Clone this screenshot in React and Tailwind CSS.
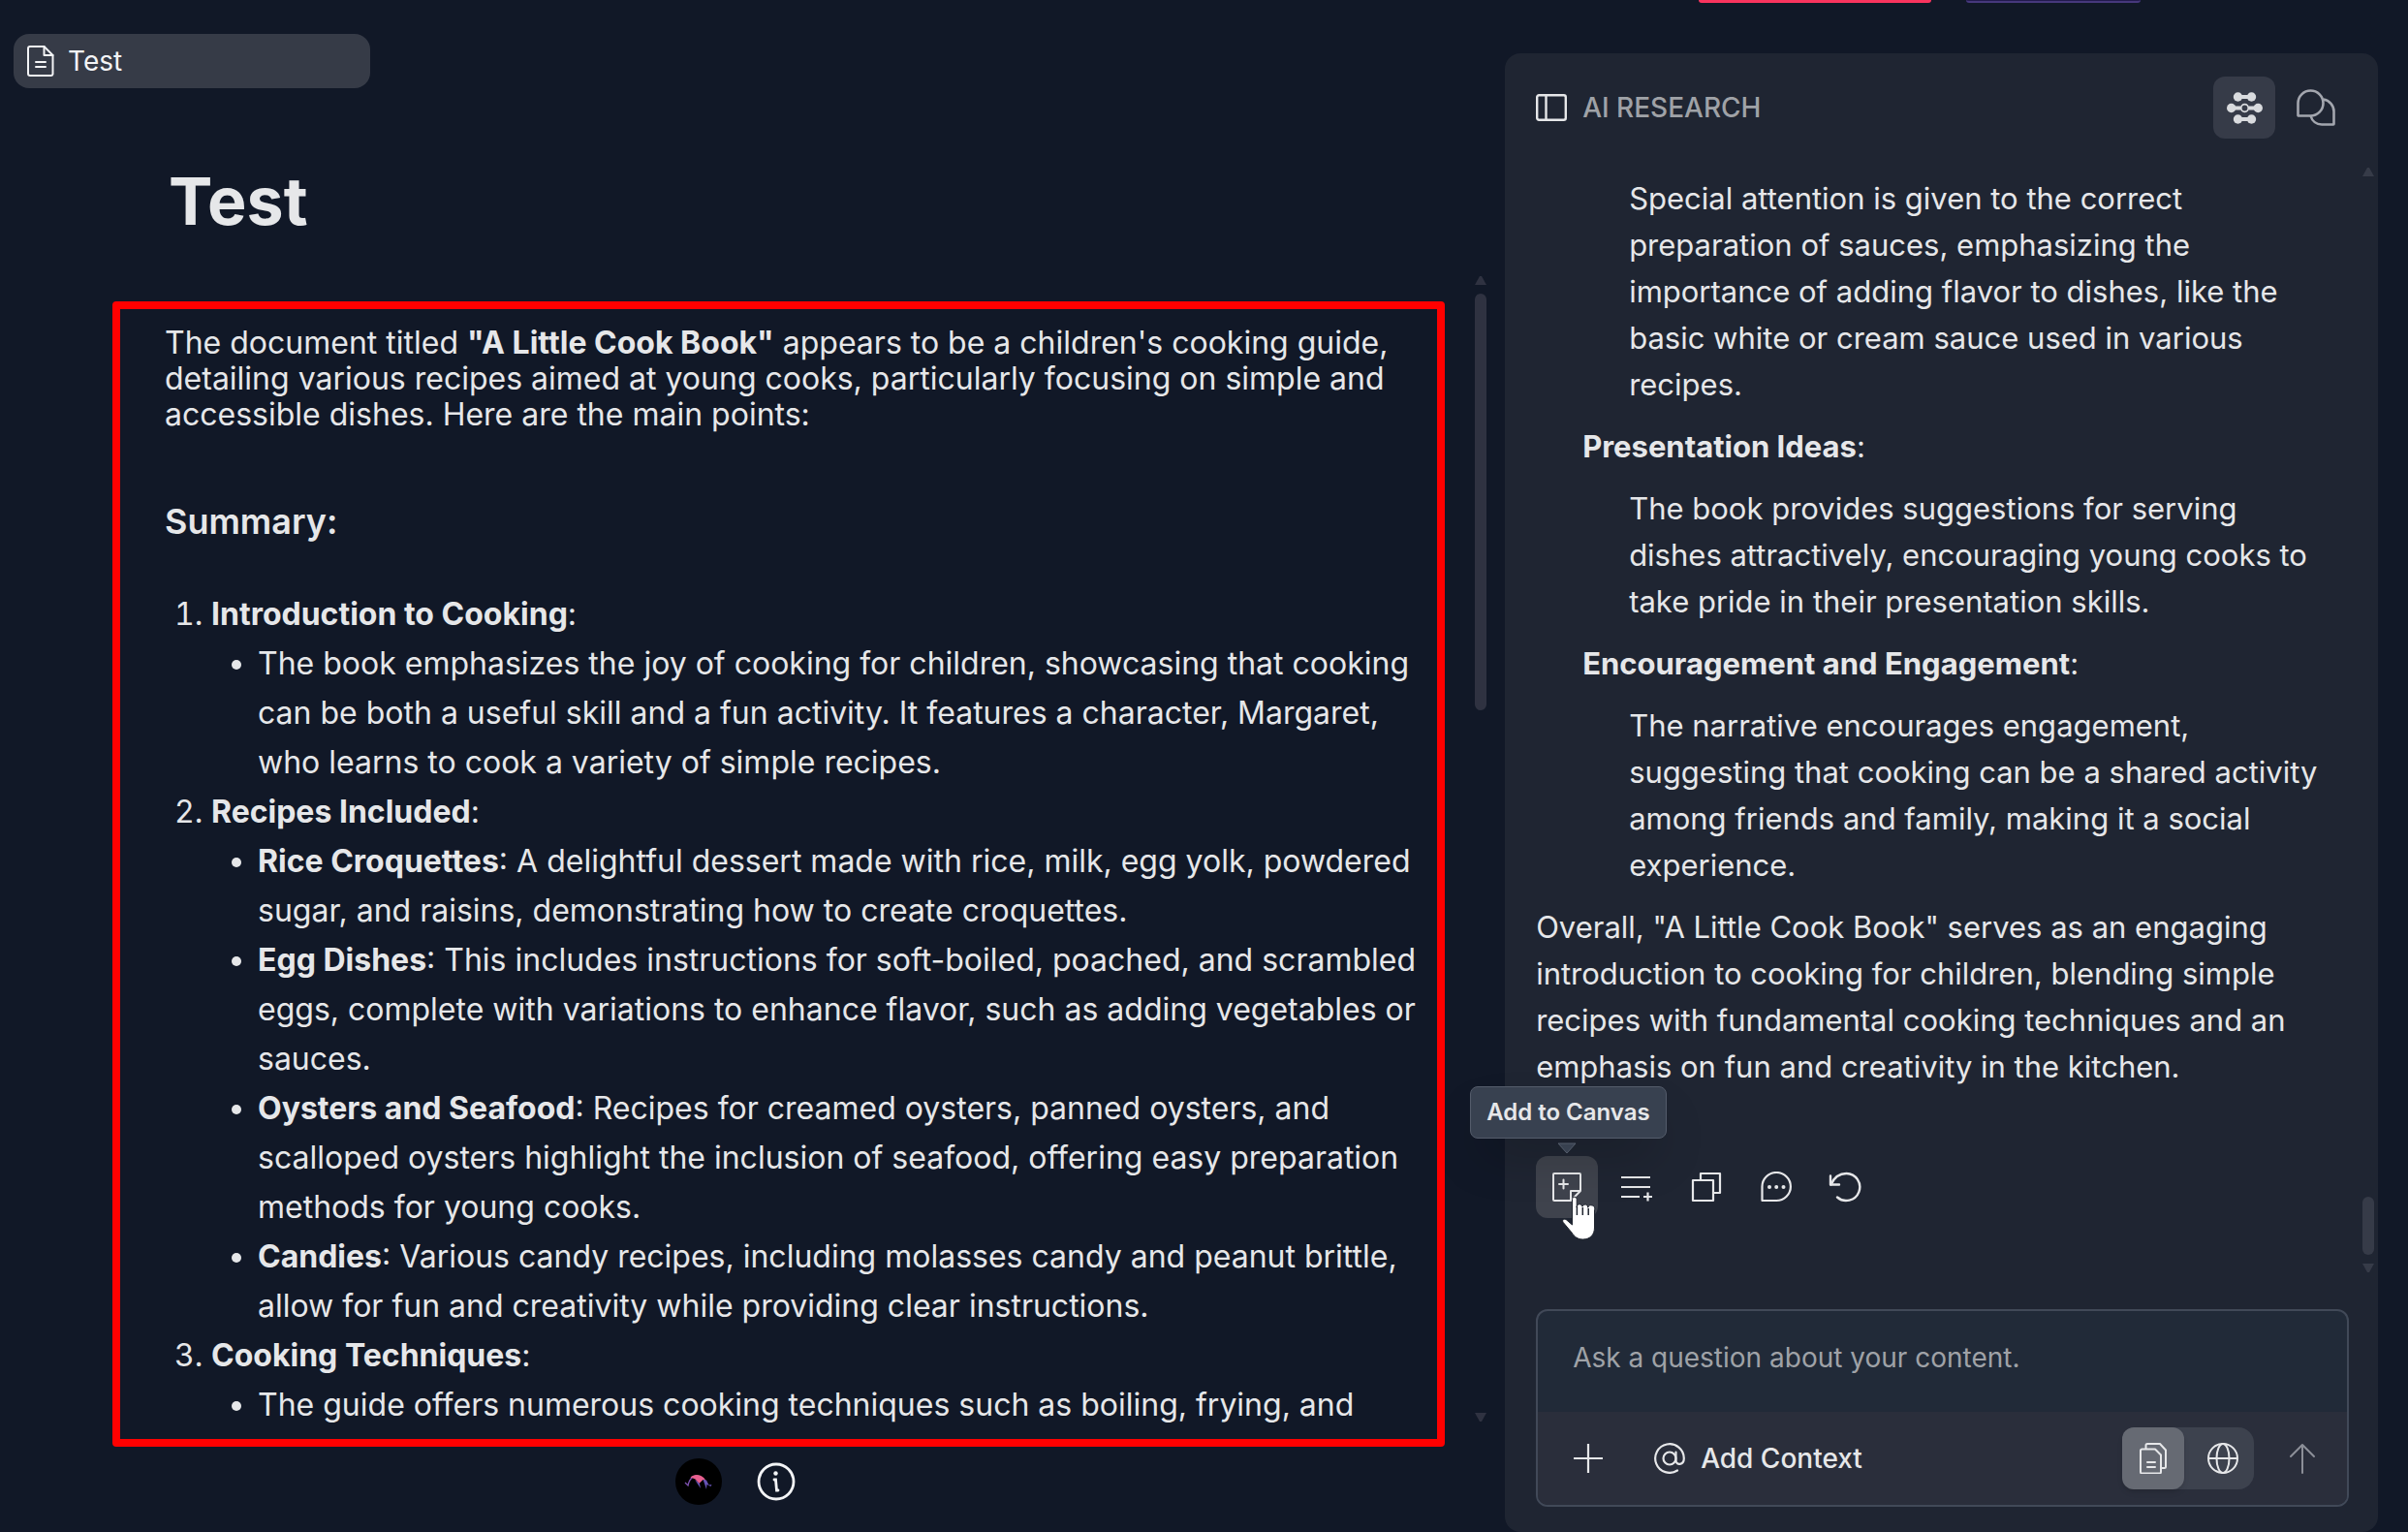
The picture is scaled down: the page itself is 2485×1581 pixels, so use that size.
import React from 'react';

const ICON = 'fill-none stroke-current';

function DocIcon() {
  return (
    <svg className={`${ICON} w-7 h-8`} viewBox="0 0 28 32" strokeWidth="2" strokeLinejoin="round" strokeLinecap="round">
      <path d="M3 1h14.500l9 9v19.500a2 2 0 0 1-2 1.500H3a2 2 0 0 1-2-2V3a2 2 0 0 1 2-2z" />
      <path d="M17.500 1v9h9M9 17h10M9 22h10" />
    </svg>
  );
}

function PanelIcon() {
  return (
    <svg className={`${ICON} w-8 h-7`} viewBox="0 0 32 28" strokeWidth="2.400">
      <rect x="1.200" y="1.200" width="29.600" height="25.600" rx="2" />
      <path d="M10.500 1v26" />
    </svg>
  );
}

function AgentsIcon() {
  return (
    <svg className="w-[37px] h-[33px]" viewBox="0 0 37 33" fill="currentColor" stroke="currentColor" strokeWidth="0">
      <path d="M11.500 5h14M5 16.500h9M23 16.500h9M11.500 28h14" strokeWidth="4" />
      <circle cx="11.500" cy="5" r="4.700" />
      <circle cx="25.500" cy="5" r="4.700" />
      <circle cx="4.700" cy="16.500" r="4.700" />
      <circle cx="32.300" cy="16.500" r="4.700" />
      <circle cx="11.500" cy="28" r="4.700" />
      <circle cx="25.500" cy="28" r="4.700" />
      <circle cx="18.500" cy="16.500" r="3.800" fill="none" strokeWidth="1.800" />
    </svg>
  );
}

function ChatsIcon() {
  return (
    <svg className={`${ICON} w-10 h-[38px]`} viewBox="0 0 40 38" strokeWidth="2.600" strokeLinejoin="round">
      <path d="M1.500 27V14.500a13 13 0 1 1 13 13H2a.5.5 0 0 1-.5-.5z" />
      <path d="M27.500 10.500C34 11.500 38.500 17 38.500 23v13a.5.5 0 0 1-.5.5H26c-5.500 0-10-3.500-11.500-9" />
    </svg>
  );
}

function NoteAddIcon() {
  return (
    <svg className={`${ICON} w-8 h-8`} viewBox="0 0 32 32" strokeWidth="2" strokeLinejoin="round" strokeLinecap="round">
      <path d="M20 30H3a1 1 0 0 1-1-1V3a1 1 0 0 1 1-1h26a1 1 0 0 1 1 1v17l-10 10V20h10" />
      <path d="M12.500 8.500v9M8 13h9" />
    </svg>
  );
}

function ListAddIcon() {
  return (
    <svg className={`${ICON} w-8 h-8`} viewBox="0 0 32 32" strokeWidth="2.200">
      <path d="M0 6h30M0 16h30M0 26h19M23 26h9M27.500 21.500v9" />
    </svg>
  );
}

function CopyIcon() {
  return (
    <svg className={`${ICON} w-8 h-8`} viewBox="0 0 32 32" strokeWidth="2.200" strokeLinejoin="round">
      <path d="M2 9h21v21H2z" />
      <path d="M10 9V2h20v20h-7" />
    </svg>
  );
}

function CommentIcon() {
  return (
    <svg className={`${ICON} w-8 h-8`} viewBox="0 0 32 32" strokeWidth="2.200" strokeLinejoin="round">
      <path d="M1.500 30V15.500a14.700 14.500 0 1 1 14.700 14.500z" />
      <g fill="currentColor" stroke="none">
        <circle cx="9" cy="16" r="2" />
        <circle cx="16.200" cy="16" r="2" />
        <circle cx="23.500" cy="16" r="2" />
      </g>
    </svg>
  );
}

function UndoIcon() {
  return (
    <svg className={`${ICON} w-9 h-8`} viewBox="0 0 36 32" strokeWidth="2.400" strokeLinejoin="round" strokeLinecap="round">
      <path d="M2 4.500v9h9" />
      <path d="M2.500 13.500C6 5.500 12 2 18.500 2a14 14 0 1 1-9.500 24.500" />
    </svg>
  );
}

function FilesIcon() {
  return (
    <svg className={`${ICON} w-7 h-8`} viewBox="0 0 28 32" strokeWidth="2" strokeLinejoin="round" strokeLinecap="round">
      <path d="M2.500 6.500H16l6 6V30a1.500 1.500 0 0 1-1.500 1.500h-18A1.500 1.500 0 0 1 1 30V8a1.500 1.500 0 0 1 1.500-1.500z" />
      <path d="M6.500 6V2.500A1.500 1.500 0 0 1 8 1h13l6 6.500v17a1.500 1.500 0 0 1-1.500 1.500H23M8 20h8M8 25h8" />
    </svg>
  );
}

function GlobeIcon() {
  return (
    <svg className={`${ICON} w-8 h-8`} viewBox="0 0 32 32" strokeWidth="2">
      <circle cx="16" cy="16" r="15" />
      <path d="M1 16h30" />
      <ellipse cx="16" cy="16" rx="6.500" ry="15" />
    </svg>
  );
}

function AtIcon() {
  return (
    <svg className={`${ICON} w-8 h-8`} viewBox="0 0 32 32" strokeWidth="2.200" strokeLinecap="round">
      <circle cx="16" cy="16" r="6.500" />
      <path d="M22.500 9.500V18c0 6 8.300 5 8.300-2A14.800 14.800 0 1 0 24 28.500" />
    </svg>
  );
}

function InfoIcon() {
  return (
    <svg className={`${ICON} w-10 h-10`} viewBox="0 0 40 40" strokeWidth="2.800" strokeLinecap="round">
      <circle cx="20" cy="20" r="18" />
      <circle cx="19.500" cy="11.500" r="2.200" fill="currentColor" stroke="none" />
      <path d="M18 18h1.500l1 11h1.500" />
    </svg>
  );
}

function Avatar() {
  return (
    <svg className="w-12 h-12" viewBox="0 0 48 48">
      <circle cx="24" cy="24" r="24" fill="#000" />
      <path d="M10 25l3 3c1-5 4-9 8-10" fill="none" stroke="#7d52b0" strokeWidth="1.300" />
      <path d="M15.500 19.500c4-4 13-3.500 16 4l-3-1.500-4 4-4-4.500z" fill="#e8608f" />
      <path d="M20 22l4 6 2 3-1-5zM28.500 22l1.500 4 2 6 .5-5 4 2 1-2-3 .5-2.500-5z" fill="#6552b5" />
    </svg>
  );
}

function HandCursor() {
  return (
    <svg className="absolute left-6 top-10 w-10 h-12 pointer-events-none" viewBox="0 0 40 48">
      <path
        d="M13.500 4.500a2.300 2.300 0 0 1 4.700 0V13a2.900 2.900 0 0 1 5.800-.8 2.900 2.900 0 0 1 5.700 1 2.900 2.900 0 0 1 6.800 2.500V34c0 7-4.500 12-12 12-5.500 0-9-3-11.500-7L4.200 28.500c-1.700-2.800 1-4.500 3.500-2.500l5.800 5z"
        fill="#fff"
        stroke="#20252f"
        strokeWidth="1"
      />
      <path d="M18.400 12v9M24.300 13v8M30.200 14v7" stroke="#20252f" strokeWidth="1.500" />
    </svg>
  );
}

function Arrow({ down }) {
  return (
    <svg className="w-3 h-3 shrink-0" viewBox="0 0 12 12" fill="currentColor">
      <path d={down ? 'M0 1h12l-5 9h-2z' : 'M0 11h12L7 2H5z'} />
    </svg>
  );
}

const sections = [
  {
    title: 'Introduction to Cooking',
    items: [
      {
        text: 'The book emphasizes the joy of cooking for children, showcasing that cooking can be both a useful skill and a fun activity. It features a character, Margaret, who learns to cook a variety of simple recipes.',
      },
    ],
  },
  {
    title: 'Recipes Included',
    items: [
      {
        name: 'Rice Croquettes',
        text: 'A delightful dessert made with rice, milk, egg yolk, powdered sugar, and raisins, demonstrating how to create croquettes.',
      },
      {
        name: 'Egg Dishes',
        text: 'This includes instructions for soft-boiled, poached, and scrambled eggs, complete with variations to enhance flavor, such as adding vegetables or sauces.',
      },
      {
        name: 'Oysters and Seafood',
        text: 'Recipes for creamed oysters, panned oysters, and scalloped oysters highlight the inclusion of seafood, offering easy preparation methods for young cooks.',
      },
      {
        name: 'Candies',
        text: 'Various candy recipes, including molasses candy and peanut brittle, allow for fun and creativity while providing clear instructions.',
      },
    ],
  },
  {
    title: 'Cooking Techniques',
    items: [{ text: 'The guide offers numerous cooking techniques such as boiling, frying, and' }],
  },
];

const answer = [
  {
    text: 'Special attention is given to the correct preparation of sauces, emphasizing the importance of adding flavor to dishes, like the basic white or cream sauce used in various recipes.',
  },
  {
    title: 'Presentation Ideas',
    text: 'The book provides suggestions for serving dishes attractively, encouraging young cooks to take pride in their presentation skills.',
  },
  {
    title: 'Encouragement and Engagement',
    text: 'The narrative encourages engagement, suggesting that cooking can be a shared activity among friends and family, making it a social experience.',
  },
];

const actions = [
  { label: 'Add to list', Icon: ListAddIcon },
  { label: 'Copy', Icon: CopyIcon },
  { label: 'Comment', Icon: CommentIcon },
  { label: 'Regenerate', Icon: UndoIcon },
];

function Editor() {
  return (
    <main className="flex-1 min-w-0 flex flex-col">
      <div className="pt-[35px] pl-3.5">
        <button className="flex items-center gap-3.5 w-92 h-14 px-3.5 rounded-2xl bg-[#363b47] text-[28px] text-gray-100">
          <DocIcon />
          Test
        </button>
      </div>
      <h1 className="mt-19 pl-43.5 text-[68px] leading-20 font-bold text-[#e6e7e9]">Test</h1>

      <div className="flex-1 min-h-0 flex pt-9 pl-29">
        <div className="flex-1 min-w-0 pt-7">
          <div className="h-full border-8 border-[#ff0000] rounded-sm pl-11.5 pr-4 pt-4 overflow-hidden text-[32px] text-[#e6e7e9]">
            <p className="leading-[37px]">
              The document titled <strong>"A Little Cook Book"</strong> appears to be a children's cooking guide,
              detailing various recipes aimed at young cooks, particularly focusing on simple and accessible dishes.
              Here are the main points:
            </p>
            <h2 className="mt-17 text-[36px] leading-12 font-semibold">Summary:</h2>
            <ol className="mt-11.5 pl-12 list-decimal leading-[51px]">
              {sections.map((section) => (
                <li key={section.title}>
                  <strong>{section.title}</strong>:
                  <ul className="pl-12 list-disc">
                    {section.items.map((item) => (
                      <li key={item.text}>
                        {item.name && (
                          <>
                            <strong>{item.name}</strong>:{' '}
                          </>
                        )}
                        {item.text}
                      </li>
                    ))}
                  </ul>
                </li>
              ))}
            </ol>
          </div>
        </div>
        <div className="w-15.5 pl-3 flex flex-col items-center gap-2 text-[#2f3241]">
          <Arrow />
          <div className="w-3 h-[430px] rounded-full bg-current" />
          <div className="flex-1" />
          <Arrow down />
          <div className="h-4" />
        </div>
      </div>

      <div className="flex items-center justify-center gap-9 h-22 pb-4 pr-9 text-gray-100">
        <button aria-label="Account">
          <Avatar />
        </button>
        <button aria-label="Info">
          <InfoIcon />
        </button>
      </div>
    </main>
  );
}

function Research() {
  return (
    <aside className="w-[37.5%] shrink-0 flex flex-col">
      <div className="h-[55px] flex gap-9 pl-50">
        <div className="w-60 h-[3px] rounded-b-xl bg-[#f9345e]" />
        <div className="w-45 h-[3px] rounded-b-xl bg-[#221a4d] border-b-2 border-[#46387c]" />
      </div>
      <section className="flex-1 min-h-0 mr-[31px] rounded-2xl bg-[#1f2532] flex flex-col text-[#e6e7e9]">
        <header className="flex items-center pt-6 px-8">
          <PanelIcon />
          <h2 className="ml-4 flex-1 text-[28px] font-medium text-[#9fa2a7]">AI RESEARCH</h2>
          <button aria-label="Agents" className="w-16 h-16 rounded-xl bg-[#363b48] grid place-items-center text-[#d9dbde]">
            <AgentsIcon />
          </button>
          <button aria-label="Chats" className="w-16 h-16 ml-2.5 grid place-items-center text-[#a3a6ae]">
            <ChatsIcon />
          </button>
        </header>

        <div className="flex-1 min-h-0 flex pt-7">
          <div className="flex-1 min-w-0 pt-2.5 pl-8 pr-10 text-[31px] leading-12">
            {answer.map((part) => (
              <div key={part.text} className="pl-12">
                {part.title && (
                  <p className="py-4">
                    <strong>{part.title}</strong>:
                  </p>
                )}
                <p className="pl-12">{part.text}</p>
              </div>
            ))}
            <p className="pt-4">
              Overall, "A Little Cook Book" serves as an engaging introduction to cooking for children, blending simple
              recipes with fundamental cooking techniques and an emphasis on fun and creativity in the kitchen.
            </p>
            <div className="relative flex gap-2 mt-17">
              <div
                role="tooltip"
                className="absolute -left-17 -top-18 h-[54px] px-4 rounded-lg border border-[#545c6b] bg-[#384150] text-2xl leading-[52px] font-semibold whitespace-nowrap shadow-2xl"
              >
                Add to Canvas
              </div>
              <svg className="absolute left-5.5 -top-3.5 w-5 h-3" viewBox="0 0 20 12">
                <path d="M1 1h18l-9 10z" fill="#384150" stroke="#545c6b" />
              </svg>
              <button aria-label="Add to Canvas" className="w-16 h-16 rounded-xl bg-[#3f434d] grid place-items-center">
                <NoteAddIcon />
              </button>
              {actions.map(({ label, Icon }) => (
                <button key={label} aria-label={label} className="w-16 h-16 grid place-items-center">
                  <Icon />
                </button>
              ))}
              <HandCursor />
            </div>
          </div>
          <div className="w-4 flex flex-col gap-2 text-[#363b48]">
            <Arrow />
            <div className="flex-1" />
            <div className="w-3 h-[60px] rounded-full bg-current" />
            <Arrow down />
            <div className="h-7" />
          </div>
        </div>

        <form className="ml-8 mr-7.5 mb-6.5 rounded-xl border-2 border-[#414958] bg-[#212a38] overflow-hidden">
          <textarea
            aria-label="Question"
            placeholder="Ask a question about your content."
            className="block w-full h-[104px] px-9 py-6.5 resize-none outline-none text-[28px] leading-11 placeholder:text-[#9fa2a7]"
          />
          <div className="flex items-center h-24 bg-[#2a2e3b] pl-9 pr-8">
            <button type="button" aria-label="Attach">
              <svg className={`${ICON} w-8 h-8`} viewBox="0 0 32 32" strokeWidth="2.200">
                <path d="M1 16h30M16 1v30" />
              </svg>
            </button>
            <button type="button" className="ml-13 flex items-center gap-4 text-[28px] font-medium">
              <AtIcon />
              Add Context
            </button>
            <div className="ml-auto flex gap-2 rounded-2xl bg-[#3d424e]">
              <button type="button" aria-label="Documents" className="w-16 h-16 rounded-xl bg-[#666a73] shadow-md grid place-items-center">
                <FilesIcon />
              </button>
              <button type="button" aria-label="Web" className="w-16 h-16 grid place-items-center">
                <GlobeIcon />
              </button>
            </div>
            <button aria-label="Send" className="ml-9 text-[#8c8f98]">
              <svg className={`${ICON} w-7 h-8`} viewBox="0 0 28 32" strokeWidth="2" strokeLinecap="round" strokeLinejoin="round">
                <path d="M14 31V2M2 14L14 2l12 12" />
              </svg>
            </button>
          </div>
        </form>
      </section>
    </aside>
  );
}

export default function App() {
  return (
    <div className="h-screen flex overflow-hidden bg-[#111827] font-['Inter',sans-serif]">
      <Editor />
      <Research />
    </div>
  );
}
